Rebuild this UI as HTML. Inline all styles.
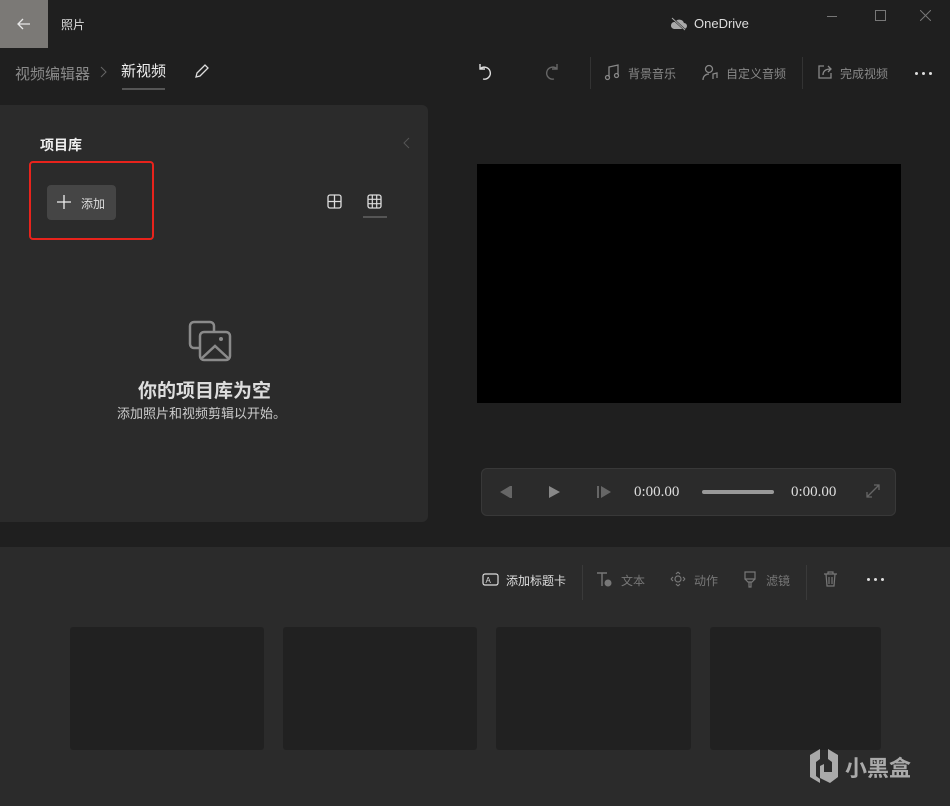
<!DOCTYPE html>
<html><head><meta charset="utf-8"><style>
*{margin:0;padding:0;box-sizing:border-box}
body{width:950px;height:806px;background:#1f1f1f;font-family:"Liberation Sans","Noto Sans CJK SC",sans-serif;color:#fff;position:relative;overflow:hidden}
.a{position:absolute}
.t{font-size:12px;color:#9a9a9a;white-space:nowrap}
.dots{position:absolute;display:flex;gap:4px}
.dots i{width:3px;height:3px;border-radius:50%;background:#ddd;display:block}
</style></head><body>
<div class="a" style="left:0;top:0;width:48px;height:48px;background:#7b7976"></div>
<svg class="a" style="left:16px;top:16px" width="16" height="16" viewBox="0 0 16 16"><path d="M14 8H2M7 3L2 8l5 5" stroke="#e8e8e8" stroke-width="1.3" fill="none"/></svg>
<div class="a" style="left:61px;top:16px;font-size:12px;color:#ddd">照片</div>
<svg class="a" style="left:670px;top:17px" width="18" height="14" viewBox="0 0 18 14"><path d="M4 12h10a3 3 0 0 0 0-6 5 5 0 0 0-9-1 3.5 3.5 0 0 0-1 7z" fill="#aaa"/><path d="M2 1l13 12" stroke="#1f1f1f" stroke-width="2"/><path d="M2 1l13 12" stroke="#aaa" stroke-width="1"/></svg>
<div class="a" style="left:694px;top:16px;font-size:13px;color:#ddd">OneDrive</div>
<div class="a" style="left:827px;top:16px;width:10px;height:1px;background:#777"></div>
<div class="a" style="left:875px;top:10px;width:11px;height:11px;border:1px solid #777"></div>
<svg class="a" style="left:920px;top:10px" width="11" height="11"><path d="M0 0L11 11M11 0L0 11" stroke="#777"/></svg>
<div class="a" style="left:15px;top:63px;font-size:15px;color:#8a8a8a">视频编辑器</div>
<svg class="a" style="left:100px;top:66px" width="8" height="12"><path d="M1 1l5 5-5 5" stroke="#666" fill="none"/></svg>
<div class="a" style="left:121px;top:60px;font-size:15px;color:#eee">新视频</div>
<div class="a" style="left:122px;top:88px;width:43px;height:2px;background:#555"></div>
<svg class="a" style="left:193px;top:62px" width="18" height="18" viewBox="0 0 18 18"><path d="M3 15l1-4 8-8 3 3-8 8z" stroke="#ddd" stroke-width="1.3" fill="none"/></svg>
<svg class="a" style="left:476px;top:62px" width="18" height="20" viewBox="0 0 18 20"><path d="M4 2v5h5M4 7a6 6 0 1 1 3 10" stroke="#ddd" stroke-width="1.4" fill="none"/></svg>
<svg class="a" style="left:543px;top:62px" width="18" height="20" viewBox="0 0 18 20"><path d="M14 2v5H9M14 7A6 6 0 1 0 11 17" stroke="#666" stroke-width="1.4" fill="none"/></svg>
<div class="a" style="left:590px;top:57px;width:1px;height:32px;background:#333"></div>
<div class="a" style="left:802px;top:57px;width:1px;height:32px;background:#333"></div>
<svg class="a" style="left:604px;top:64px" width="16" height="17"><path d="M5 13V3l9-2v10" stroke="#888" fill="none" stroke-width="1.3"/><circle cx="3.5" cy="13.5" r="2" stroke="#888" fill="none" stroke-width="1.3"/><circle cx="12.5" cy="11.5" r="2" stroke="#888" fill="none" stroke-width="1.3"/></svg>
<div class="a t" style="left:628px;top:65px;color:#888">背景音乐</div>
<svg class="a" style="left:702px;top:64px" width="17" height="17"><circle cx="7" cy="5" r="3.5" stroke="#888" fill="none" stroke-width="1.3"/><path d="M1 16c0-4 3-6 6-6" stroke="#888" fill="none" stroke-width="1.3"/><path d="M11 15V10l4-1v5" stroke="#888" fill="none" stroke-width="1.3"/></svg>
<div class="a t" style="left:726px;top:65px;color:#888">自定义音频</div>
<svg class="a" style="left:817px;top:64px" width="16" height="16"><path d="M7 2H2v12h12V9" stroke="#888" fill="none" stroke-width="1.3"/><path d="M6 11c0-4 3-6 8-6M11 2l3 3-3 3" stroke="#888" fill="none" stroke-width="1.3"/></svg>
<div class="a t" style="left:840px;top:65px;color:#888">完成视频</div>
<div class="dots" style="left:915px;top:72px"><i></i><i></i><i></i></div>
<div class="a" style="left:0;top:105px;width:428px;height:417px;background:#2b2b2b;border-radius:0 6px 6px 0"></div>
<div class="a" style="left:40px;top:135px;font-size:14px;font-weight:bold;color:#eee">项目库</div>
<svg class="a" style="left:403px;top:137px" width="7" height="12"><path d="M6 1L1 6l5 5" stroke="#555" fill="none"/></svg>
<div class="a" style="left:29px;top:161px;width:125px;height:79px;border:2px solid #e8231c;border-radius:4px"></div>
<div class="a" style="left:47px;top:185px;width:69px;height:35px;background:#454545;border-radius:4px"></div>
<svg class="a" style="left:57px;top:195px" width="14" height="14"><path d="M7 0v14M0 7h14" stroke="#eee" stroke-width="1.3"/></svg>
<div class="a" style="left:81px;top:195px;font-size:12px;color:#ddd">添加</div>
<svg class="a" style="left:327px;top:194px" width="15" height="15"><rect x="1" y="1" width="13" height="13" rx="2" stroke="#ddd" fill="none" stroke-width="1.3"/><path d="M7.5 1v13M1 7.5h13" stroke="#ddd" stroke-width="1.3"/></svg>
<svg class="a" style="left:367px;top:194px" width="15" height="15"><rect x="1" y="1" width="13" height="13" rx="2" stroke="#ddd" fill="none" stroke-width="1.3"/><path d="M5.3 1v13M9.7 1v13M1 5.3h13M1 9.7h13" stroke="#ddd" stroke-width="1.2"/></svg>
<div class="a" style="left:363px;top:216px;width:24px;height:2px;background:#555"></div>
<svg class="a" style="left:188px;top:320px" width="45" height="42" viewBox="0 0 45 42"><rect x="2" y="2" width="24" height="26" rx="4" stroke="#8a8a8a" stroke-width="2.5" fill="none"/><rect x="12" y="12" width="30" height="28" rx="4" stroke="#8a8a8a" stroke-width="2.5" fill="#2b2b2b"/><path d="M14 38l13-12 13 12" stroke="#8a8a8a" stroke-width="2.5" fill="none"/><circle cx="33" cy="19" r="2" fill="#8a8a8a"/></svg>
<div class="a" style="left:138px;top:376px;font-size:19px;font-weight:bold;color:#ddd">你的项目库为空</div>
<div class="a" style="left:117px;top:403px;font-size:13px;color:#ccc">添加照片和视频剪辑以开始。</div>
<div class="a" style="left:477px;top:164px;width:424px;height:239px;background:#000"></div>
<div class="a" style="left:481px;top:468px;width:415px;height:48px;background:#2b2b2b;border:1px solid #383838;border-radius:6px"></div>
<svg class="a" style="left:497px;top:484px" width="120" height="16"><path d="M3 8l10-6v12z" fill="#666"/><rect x="13" y="2" width="2" height="12" fill="#666"/><path d="M52 2l11 6-11 6z" fill="#888"/><rect x="100" y="2" width="2" height="12" fill="#666"/><path d="M104 2l10 6-10 6z" fill="#666"/></svg>
<div class="a" style="left:634px;top:484px;font-size:15px;color:#ddd;font-family:'Liberation Serif',serif">0:00.00</div>
<div class="a" style="left:702px;top:490px;width:72px;height:4px;background:#999;border-radius:2px"></div>
<div class="a" style="left:791px;top:484px;font-size:15px;color:#ddd;font-family:'Liberation Serif',serif">0:00.00</div>
<svg class="a" style="left:866px;top:484px" width="14" height="14"><path d="M1 13L13 1M8 1h5v5M1 8v5h5" stroke="#666" fill="none" stroke-width="1.3"/></svg>
<div class="a" style="left:0;top:547px;width:950px;height:259px;background:#2b2b2b"></div>
<svg class="a" style="left:482px;top:573px" width="17" height="13"><rect x="1" y="1" width="15" height="11" rx="2" stroke="#ddd" fill="none" stroke-width="1.2"/><text x="3.5" y="10" font-size="8" fill="#ddd" font-family="Liberation Sans">A</text></svg>
<div class="a" style="left:506px;top:572px;font-size:12px;color:#ddd">添加标题卡</div>
<div class="a" style="left:582px;top:565px;width:1px;height:35px;background:#3a3a3a"></div>
<div class="a" style="left:806px;top:565px;width:1px;height:35px;background:#3a3a3a"></div>
<svg class="a" style="left:596px;top:572px" width="18" height="16"><path d="M1 1h10M6 1v13" stroke="#777" stroke-width="1.4"/><circle cx="12" cy="11" r="3.5" fill="#777"/></svg>
<div class="a t" style="left:621px;top:572px;color:#777">文本</div>
<svg class="a" style="left:670px;top:571px" width="16" height="16"><path d="M8 1l2 2M8 1L6 3M15 8l-2 2M15 8l-2-2M8 15l2-2M8 15l-2-2M1 8l2 2M1 8l2-2" stroke="#777" stroke-width="1.2"/><circle cx="8" cy="8" r="3" stroke="#777" fill="none" stroke-width="1.2"/></svg>
<div class="a t" style="left:694px;top:572px;color:#777">动作</div>
<svg class="a" style="left:744px;top:571px" width="12" height="17"><path d="M1 1h10v7H1zM1 8l3 3h4l3-3M5 11v5h2v-5" stroke="#777" fill="none" stroke-width="1.2"/></svg>
<div class="a t" style="left:766px;top:572px;color:#777">滤镜</div>
<svg class="a" style="left:823px;top:571px" width="15" height="16"><path d="M1 3h13M5 3V1h5v2M3 3l1 12h7l1-12M6 6v7M9 6v7" stroke="#777" fill="none" stroke-width="1.2"/></svg>
<div class="dots" style="left:867px;top:578px"><i></i><i></i><i></i></div>
<div class="a" style="left:70px;top:627px;width:194px;height:123px;background:#212121;border-radius:3px"></div>
<div class="a" style="left:283px;top:627px;width:194px;height:123px;background:#212121;border-radius:3px"></div>
<div class="a" style="left:496px;top:627px;width:195px;height:123px;background:#212121;border-radius:3px"></div>
<div class="a" style="left:710px;top:627px;width:171px;height:123px;background:#212121;border-radius:3px"></div>
<svg class="a" style="left:808px;top:747px" width="32" height="38" viewBox="0 0 32 38"><path d="M2 8l10-6v10l-4 3v14l4 3v4L2 30z" fill="#aaa"/><path d="M30 8L20 2v10l4 3v10h-8v-8l-4 2v12l10 5 8-6z" fill="#aaa"/></svg>
<div class="a" style="left:845px;top:751px;font-size:22px;color:#aaa;font-weight:bold">小黑盒</div>
</body></html>
